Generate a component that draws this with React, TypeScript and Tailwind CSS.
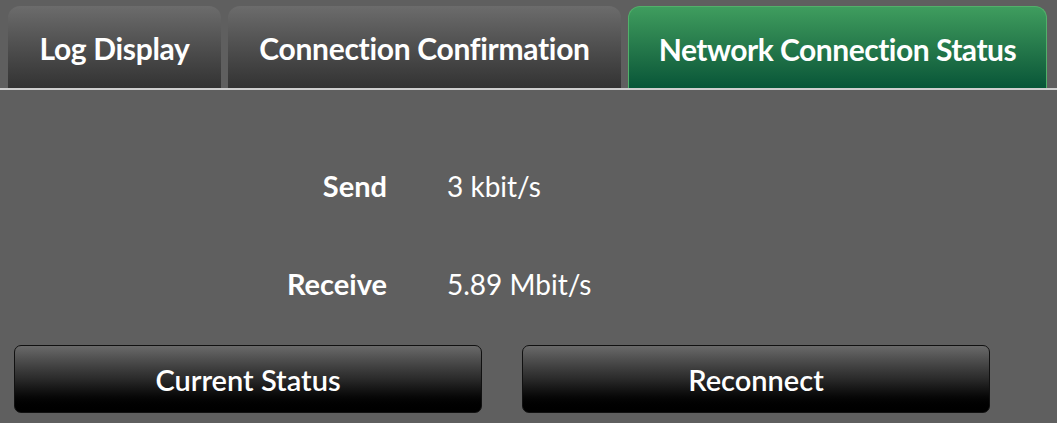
const tabs = [
  { label: "Log Display", width: "w-[213px]", active: false },
  { label: "Connection Confirmation", width: "w-[393px]", active: false },
  { label: "Network Connection Status", width: "w-[419px]", active: true },
];

const rows = [
  { label: "Send", value: "3 kbit/s" },
  { label: "Receive", value: "5.89 Mbit/s" },
];

function Tab({ label, width, active }: { label: string; width: string; active: boolean }) {
  return (
    <div
      className={
        "h-[82px] flex items-center justify-center pt-[3px] rounded-t-[12px] text-[30px] font-bold tracking-[-0.3px] text-white " +
        width +
        (active
          ? " bg-gradient-to-b from-[#3f9d5e] to-[#075638] border border-b-0 border-[#52b06a] tracking-[-0.5px]"
          : " bg-gradient-to-b from-[#6c6c6c] to-[#333333] text-[#f4f4f4]")
      }
    >
      {label}
    </div>
  );
}

function Button({ label }: { label: string }) {
  return (
    <button className="w-[468px] h-[68px] pt-[2px] rounded-[7px] border-[1.5px] border-[#111111] bg-gradient-to-b from-[#6a6a6a] via-[#2a2a2a] to-[#000000] text-white text-[29px] font-semibold">
      {label}
    </button>
  );
}

export default function App() {
  return (
    <div
      className="w-[1057px] h-[423px] bg-[#5f5f5f] overflow-hidden"
      style={{ fontFamily: "Lato, 'Noto Sans', sans-serif" }}
    >
      <div className="flex gap-[7px] pl-[8px] pt-[6px] border-b-2 border-[#cfcfcf]">
        {tabs.map((t) => (
          <Tab key={t.label} {...t} />
        ))}
      </div>
      <div className="flex flex-col gap-[70px] pt-[82px] text-white text-[29px]">
        {rows.map((r) => (
          <div key={r.label} className="flex items-center h-[28px]">
            <div className="w-[387px] text-right font-bold">{r.label}</div>
            <div className="pl-[60px] text-[28px]">{r.value}</div>
          </div>
        ))}
      </div>
      <div className="flex gap-[40px] pl-[14px] pt-[47px]">
        <Button label="Current Status" />
        <Button label="Reconnect" />
      </div>
    </div>
  );
}
